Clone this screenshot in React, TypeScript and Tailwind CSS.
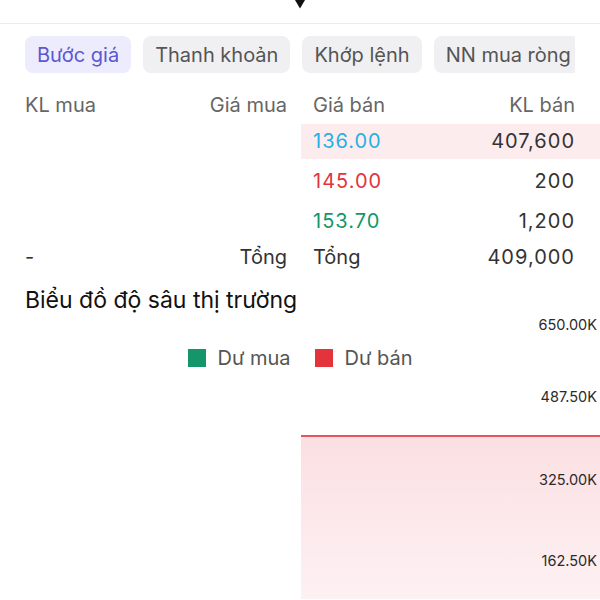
import { useState } from "react";

const tabs = ["Bước giá", "Thanh khoản", "Khớp lệnh", "NN mua ròng"];

const asks = [
  { price: "136.00", vol: "407,600", color: "text-[#25b1e3]", hl: true },
  { price: "145.00", vol: "200", color: "text-[#e3343b]", hl: false },
  { price: "153.70", vol: "1,200", color: "text-[#15966a]", hl: false },
];

const axis = [
  { label: "650.00K", top: "top-[2px]" },
  { label: "487.50K", top: "top-[74px]" },
  { label: "325.00K", top: "top-[157px]" },
  { label: "162.50K", top: "top-[238px]" },
];

function DepthChart() {
  return (
    <div className="relative h-[285px] w-full">
      {/* area */}
      <svg className="absolute inset-0" width="600" height="285" viewBox="0 0 600 285">
        <defs>
          <linearGradient id="sellFill" x1="0" y1="0" x2="0" y2="1">
            <stop offset="0" stopColor="#fbdfe2" />
            <stop offset="1" stopColor="#fdf1f3" />
          </linearGradient>
        </defs>
        <rect x="301" y="122" width="299" height="163" fill="url(#sellFill)" />
        <line x1="301" y1="122" x2="600" y2="122" stroke="#e4545c" strokeWidth="2" />
      </svg>

      {/* legend */}
      <div className="absolute left-0 right-0 top-[29px] flex justify-center items-center text-[20px] text-[#555]">
        <span className="w-[18px] h-[18px] bg-[#15966a]" />
        <span className="ml-3">Dư mua</span>
        <span className="w-[18px] h-[18px] bg-[#e3343b] ml-6" />
        <span className="ml-3">Dư bán</span>
      </div>

      {/* y axis */}
      {axis.map((a) => (
        <span key={a.label} className={`absolute right-[3px] ${a.top} text-[14.5px] leading-[17px] text-[#2b2b2b]`}>
          {a.label}
        </span>
      ))}
    </div>
  );
}

export default function App() {
  const [active, setActive] = useState(0);

  return (
    <div className="w-[600px] h-[600px] overflow-hidden bg-white font-['Inter',sans-serif]">
      {/* handle */}
      <div className="h-6 border-b border-[#ececec] flex justify-center">
        <svg width="12" height="9" viewBox="0 0 12 9">
          <path d="M1 0 H11 L6 8.5 Z" fill="#111" />
        </svg>
      </div>

      {/* tabs */}
      <div className="mt-[12px] ml-[25px] mr-[25px] flex gap-[12px] overflow-hidden">
        {tabs.map((t, i) => (
          <button
            key={t}
            onClick={() => setActive(i)}
            className={
              i === active
                ? "shrink-0 h-[37px] px-[12px] rounded-lg text-[20px] bg-[#ececfc] text-[#5a58d3]"
                : "shrink-0 h-[37px] px-[12px] rounded-lg text-[20px] bg-[#f0f0f2] text-[#555]"
            }
          >
            {t}
          </button>
        ))}
      </div>

      {/* order book */}
      <div className="mt-[12px] text-[20px]">
        <div className="flex h-[36px] pt-[4px] items-center text-[#666]">
          <div className="w-[300px] pl-[25px] pr-[13px] flex justify-between">
            <span>KL mua</span>
            <span>Giá mua</span>
          </div>
          <div className="flex-1 pl-[13px] pr-[25px] flex justify-between">
            <span>Giá bán</span>
            <span>KL bán</span>
          </div>
        </div>

        {asks.map((r) => (
          <div key={r.price} className="flex h-10 items-center">
            <div className="w-[301px]" />
            <div
              className={
                r.hl
                  ? "flex-1 h-[35px] pl-[12px] pr-[25px] flex items-center justify-between bg-[#fdecee]"
                  : "flex-1 h-[35px] pl-[12px] pr-[25px] flex items-center justify-between"
              }
            >
              <span className={`${r.color} tracking-[1px]`}>{r.price}</span>
              <span className="text-[#333] tracking-[1px]">{r.vol}</span>
            </div>
          </div>
        ))}

        <div className="flex h-[30px] pt-[2px] items-center text-[#333]">
          <div className="w-[300px] pl-[25px] pr-[13px] flex justify-between">
            <span>-</span>
            <span>Tổng</span>
          </div>
          <div className="flex-1 pl-[13px] pr-[25px] flex justify-between">
            <span>Tổng</span>
            <span className="tracking-[1px]">409,000</span>
          </div>
        </div>
      </div>

      {/* depth chart */}
      <div className="mt-[15px] pl-[25px] text-[23px] leading-[28px] text-[#111]">Biểu đồ độ sâu thị trường</div>
      <DepthChart />
    </div>
  );
}
